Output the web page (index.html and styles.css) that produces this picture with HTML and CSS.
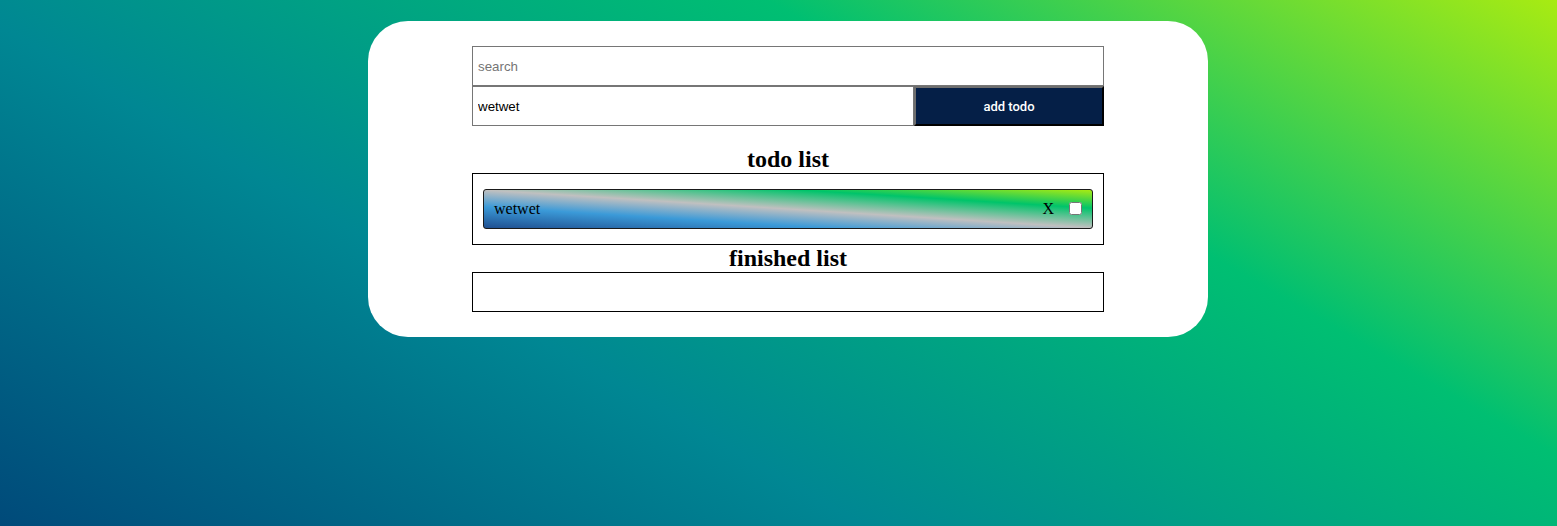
FILE: index.html
```html
<!DOCTYPE html>
<html lang="en">
<head>
<meta charset="utf-8">
<title>todo</title>
<link rel="stylesheet" href="styles.css">
</head>
<body>
<div class="page">
  <main class="card">
    <input class="search" type="text" placeholder="search">
    <div class="add-row">
      <input class="new-todo" type="text" value="wetwet">
      <button class="add-btn" type="button">add todo</button>
    </div>
    <h2 class="list-title todo-title">todo list</h2>
    <div class="list-box todo-box">
      <div class="todo-item">
        <span class="item-text">wetwet</span>
        <span class="item-actions">
          <span class="remove">X</span>
          <input class="check" type="checkbox">
        </span>
      </div>
    </div>
    <h2 class="list-title">finished list</h2>
    <div class="list-box finished-box"></div>
  </main>
</div>
</body>
</html>
```
FILE: styles.css
```css
html, body {
  margin: 0;
  padding: 0;
  height: 100%;
}
body {
  background: linear-gradient(30deg, #004a7a 0%, #008793 35%, #00bf72 68%, #a8eb12 100%);
  font-family: "Liberation Serif", "Times New Roman", serif;
  overflow: hidden;
}
.page {
  display: flex;
  justify-content: center;
  padding: 21px 0 0 19px;
}
.card {
  width: 840px;
  box-sizing: border-box;
  background: #fff;
  border-radius: 40px;
  padding: 25px 104px;
  display: flex;
  flex-direction: column;
}
.search, .new-todo {
  box-sizing: border-box;
  height: 40px;
  margin: 0;
  border: 1px solid #767676;
  padding: 0 5px;
  font-family: "Liberation Sans", Arial, sans-serif;
  font-size: 13.33px;
  color: #000;
  background: #fff;
  outline: none;
}
.search::placeholder {
  color: #757575;
}
.search {
  width: 632px;
}
.add-row {
  display: flex;
}
.new-todo {
  width: 442px;
}
.add-btn {
  box-sizing: border-box;
  width: 190px;
  height: 40px;
  margin: 0;
  background: #051f47;
  color: #fff;
  font-family: Roboto, "Liberation Sans", sans-serif;
  font-weight: 500;
  font-size: 13px;
  border-style: solid;
  border-width: 2px;
  border-color: #6e6e6e #000 #000 #6e6e6e;
  padding: 0;
}
.list-title {
  margin: 0;
  font-size: 24px;
  font-weight: bold;
  line-height: 27px;
  text-align: center;
  color: #000;
}
.todo-title {
  margin-top: 20px;
}
.list-box {
  box-sizing: border-box;
  border: 1px solid #000;
}
.todo-box {
  padding: 15px 10px;
}
.finished-box {
  height: 40px;
}
.todo-item {
  box-sizing: border-box;
  height: 40px;
  border: 1px solid #1a1a1a;
  border-radius: 3px;
  background: linear-gradient(to right top, #1f4f90 0%, #3b9ad8 28%, #c0c0c0 50%, #00c46a 76%, #a8eb12 100%);
  display: flex;
  align-items: center;
  justify-content: space-between;
  padding: 0 8px 0 10px;
  font-size: 16px;
  color: #000;
}
.item-actions {
  display: flex;
  align-items: center;
  gap: 11px;
}
.remove {
  font-size: 16px;
}
.check {
  width: 13px;
  height: 13px;
  margin: 0 2px 2px 4px;
}
```
